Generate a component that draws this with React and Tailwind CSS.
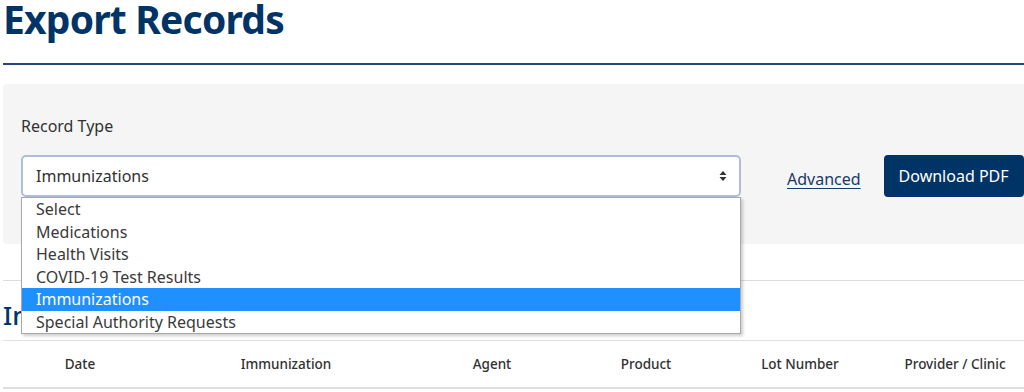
import React from 'react';

const OPTIONS = ['Select', 'Medications', 'Health Visits', 'COVID-19 Test Results', 'Immunizations', 'Special Authority Requests'];
const COLUMNS = [
  { label: 'Date', width: 'w-[154px]' },
  { label: 'Immunization', width: 'w-[258px]' },
  { label: 'Agent', width: 'w-[154px]' },
  { label: 'Product', width: 'w-[154px]' },
  { label: 'Lot Number', width: 'w-[154px]' },
  { label: 'Provider / Clinic', width: 'w-[156px]' },
];

const App = () => {
  const selected = 'Immunizations';

  return (
    <div className="w-[1024px] h-[392px] overflow-hidden bg-white font-['Noto_Sans',sans-serif] text-[#313132]">
      <div className="w-[1040px] pl-[3px]">
        <h1 className="text-[39px] leading-[44px] font-bold text-[#003366] -mt-[3px] tracking-[-0.8px]">Export Records</h1>
        <hr className="mt-[22px] border-0 h-[2px] bg-[#24467a]" />

        {/* Filter panel */}
        <div className="mt-[19px] h-[160px] bg-[#f5f5f5] rounded-[4px] pt-[32px] pl-[18px]">
          <div className="text-[16px] leading-[20px] text-[#313132]">Record Type</div>
          <div className="mt-[19px] flex items-center">
            <div className="relative">
              <div className="w-[720px] h-[42px] bg-white border-2 border-[#b0bdd8] rounded-[5px] flex items-center justify-between pl-[13px] pr-[12px] text-[16px] text-[#313132]">
                <span>{selected}</span>
                <svg width="8" height="12" viewBox="0 0 8 12" className="text-[#313132]">
                  <path d="M4 1 L7.5 5 H0.5 Z" fill="currentColor" />
                  <path d="M4 11 L7.5 7 H0.5 Z" fill="currentColor" />
                </svg>
              </div>

              {/* Open native option list */}
              <div className="absolute left-0 top-[42px] w-[720px] bg-white border border-[#a9a9a9] shadow-[2px_2px_3px_rgba(0,0,0,0.2)] z-10">
                {OPTIONS.map((opt) => (
                  <div
                    key={opt}
                    className={
                      opt === selected
                        ? 'h-[22.5px] leading-[22.5px] pl-[14px] text-[16px] bg-[#1e90ff] text-white'
                        : 'h-[22.5px] leading-[22.5px] pl-[14px] text-[16px] text-[#3a3a3a]'
                    }
                  >
                    {opt}
                  </div>
                ))}
              </div>
            </div>
            <a href="#" className="ml-[46px] mt-[5px] text-[16px] text-[#1a3a66] underline underline-offset-[3px]">Advanced</a>
            <button className="ml-[23px] h-[42px] px-[15px] bg-[#003366] text-white text-[16px] rounded-[4px]">Download PDF</button>
          </div>
        </div>

        <hr className="mt-[36px] border-0 h-px bg-[#dcdcdc]" />
        <h2 className="mt-[18px] text-[26px] leading-[32px] font-medium text-[#003366]">Immunizations</h2>
        <div className="mt-[9px] border-t border-[#e0e0e0]">
          <div className="flex h-[48px] items-center border-b-2 border-[#dedede]">
            {COLUMNS.map((c) => (
              <div key={c.label} className={`${c.width} text-center text-[13.5px] font-medium text-[#313132]`}>
                {c.label}
              </div>
            ))}
          </div>
        </div>
      </div>
    </div>
  );
};

export default App;
